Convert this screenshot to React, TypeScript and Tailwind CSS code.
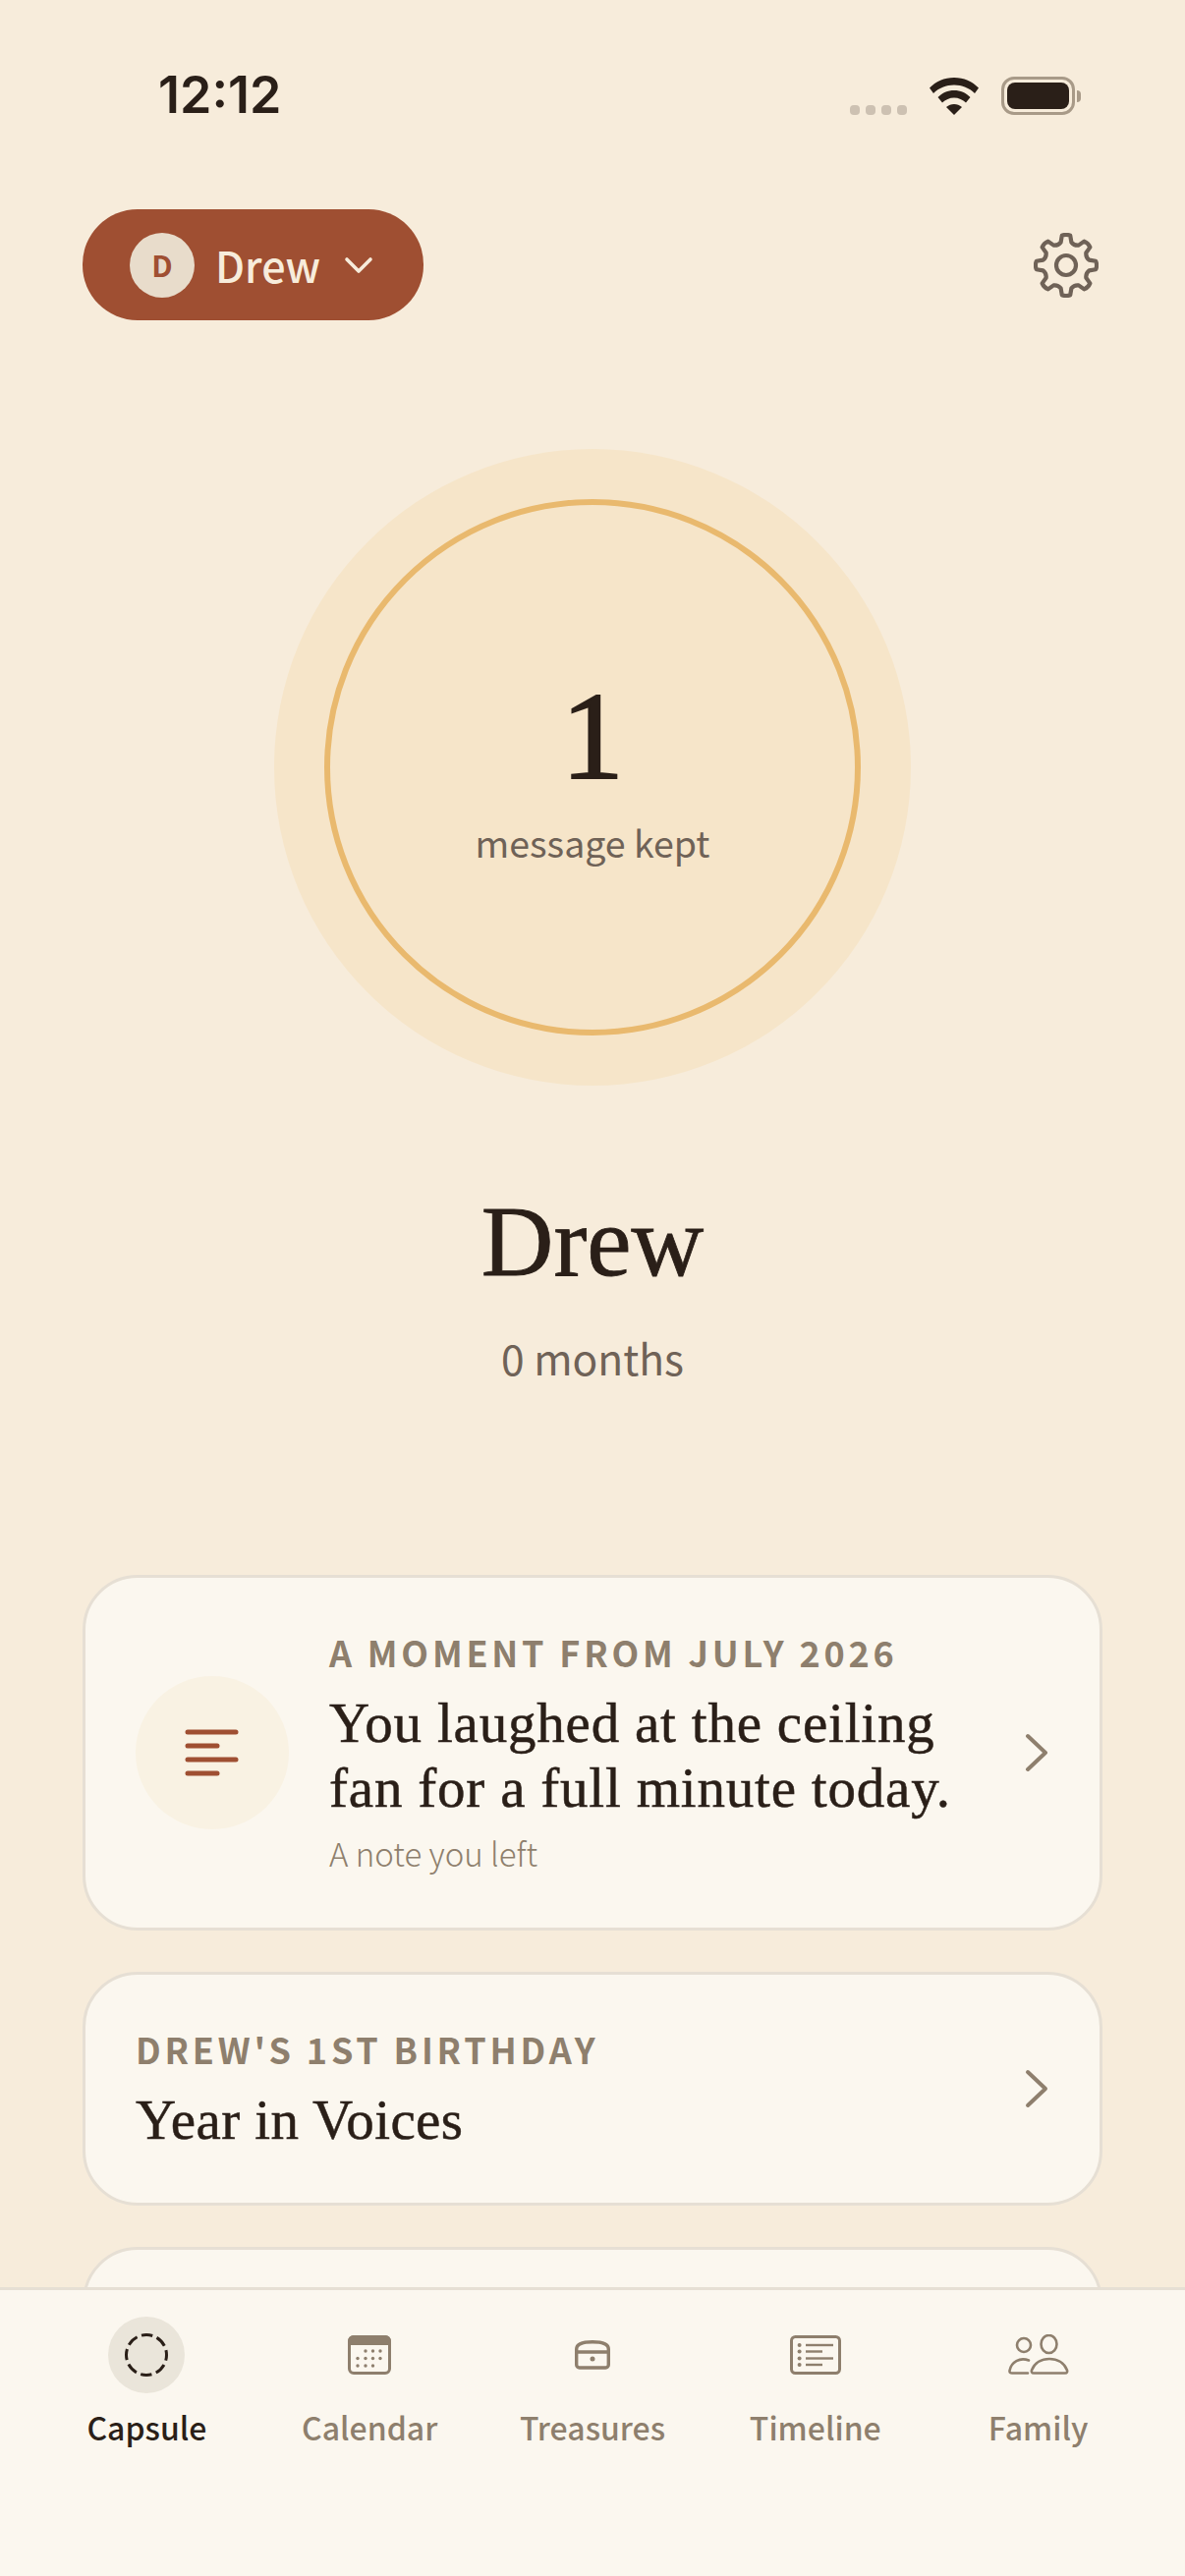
import { ChevronDown } from 'lucide-react'

const sans = "font-['Noto_Sans_CJK_SC','Noto_Sans',sans-serif]"

const CardChevron = () => (
  <svg width="24" height="40" viewBox="0 0 24 40" fill="none" className="shrink-0 text-[#8E7F6D]">
    <path d="M3 3 L21 20 L3 37" stroke="currentColor" strokeWidth="4" strokeLinecap="round" strokeLinejoin="round" />
  </svg>
)

const NoteIcon = () => (
  <svg width="56" height="48" viewBox="0 0 56 48" fill="none" stroke="#9F4F32" strokeWidth="5" strokeLinecap="round">
    <path d="M3 3H52" />
    <path d="M3 17H33" />
    <path d="M3 31H52" />
    <path d="M3 45H33" />
  </svg>
)

// 8 tooth gear outline, same shape as the settings button in the design
const gearPath = (() => {
  const c = 33
  const pt = (deg: number, r: number) => {
    const a = ((deg - 90) * Math.PI) / 180
    return `${(c + r * Math.cos(a)).toFixed(2)} ${(c + r * Math.sin(a)).toFixed(2)}`
  }
  let d = ''
  for (let i = 0; i < 8; i++) {
    const a = i * 45
    d += `${i === 0 ? 'M' : 'L'}${pt(a - 13, 24)} L${pt(a - 8, 30.5)} Q${pt(a, 32)} ${pt(a + 8, 30.5)} L${pt(a + 13, 24)} Q${pt(a + 22.5, 21.5)} ${pt(a + 32, 24)} `
  }
  return d + 'Z'
})()

const GearIcon = () => (
  <svg width="66" height="66" viewBox="0 0 66 66" fill="none" stroke="#6F6257" strokeWidth="4.2" strokeLinejoin="round">
    <path d={gearPath} />
    <circle cx="33" cy="33" r="10" />
  </svg>
)

const CapsuleIcon = () => (
  <svg width="46" height="46" viewBox="0 0 46 46" fill="none">
    <circle cx="23" cy="23" r="20.5" stroke="#2A1F18" strokeWidth="3" strokeDasharray="11.5 4.6" strokeDashoffset="5.75" />
  </svg>
)

const CalendarIcon = () => {
  const dots = [
    [18, 16], [25.5, 16], [33, 16],
    [10, 23.5], [18, 23.5], [25.5, 23.5], [33, 23.5],
    [10, 31], [18, 31], [25.5, 31],
  ]
  return (
    <svg width="44" height="40" viewBox="0 0 44 40" fill="none">
      <rect x="1.5" y="1.5" width="41" height="37" rx="4.5" stroke="#8E7F6D" strokeWidth="3" />
      <path d="M6 0H38A6 6 0 0 1 44 6V10H0V6A6 6 0 0 1 6 0Z" fill="#8E7F6D" />
      {dots.map(([cx, cy]) => (
        <circle key={`${cx}-${cy}`} cx={cx} cy={cy} r="1.7" fill="#8E7F6D" />
      ))}
    </svg>
  )
}

const TreasureIcon = () => (
  <svg width="36" height="30" viewBox="0 0 36 30" fill="none" stroke="#8E7F6D" strokeWidth="3.4">
    <path d="M1.7 25V9C1.7 4 8 1.7 18 1.7S34.300 4 34.300 9V25A3 3 0 0 1 31.300 28H4.700A3 3 0 0 1 1.700 25Z" />
    <path d="M1.700 12H34.300" />
    <circle cx="18" cy="19" r="2.500" fill="#8E7F6D" stroke="none" />
  </svg>
)

const TimelineIcon = () => (
  <svg width="52" height="40" viewBox="0 0 52 40" fill="none" stroke="#8E7F6D">
    <rect x="1.500" y="1.500" width="49" height="37" rx="4" strokeWidth="3" />
    <g strokeWidth="2.400">
      <path d="M16 10H44" />
      <path d="M16 16.500H33" />
      <path d="M16 23.500H44" />
      <path d="M16 30H33" />
    </g>
    <g fill="#8E7F6D" stroke="none">
      <circle cx="9.600" cy="10" r="2" />
      <circle cx="9.600" cy="16.500" r="2" />
      <circle cx="9.600" cy="23.500" r="2" />
      <circle cx="9.600" cy="30" r="2" />
    </g>
  </svg>
)

const FamilyIcon = () => (
  <svg width="62" height="42" viewBox="0 0 62 42" fill="none" stroke="#8E7F6D" strokeWidth="2.600" strokeLinecap="round">
    <circle cx="16" cy="11" r="7" />
    <ellipse cx="41.500" cy="10" rx="8" ry="9" />
    <path d="M21 26.500C12 23 3 28 1.500 37C1.300 39 2.500 39.500 4 39.500H20" />
    <path d="M26 39.500H58C60 39.500 60.500 38 60 36.500C57 29 50 25 42 25S27 29 24 36.500C23.500 38 24 39.500 26 39.500Z" />
  </svg>
)

const tabs = [
  { label: 'Capsule', icon: <CapsuleIcon />, active: true },
  { label: 'Calendar', icon: <CalendarIcon />, active: false },
  { label: 'Treasures', icon: <TreasureIcon />, active: false },
  { label: 'Timeline', icon: <TimelineIcon />, active: false },
  { label: 'Family', icon: <FamilyIcon />, active: false },
]

const App = () => {
  return (
    <div className={`flex h-[2622px] w-[1206px] flex-col overflow-hidden bg-[#F7ECDB] ${sans}`}>
      <div className="min-h-0 flex-1 overflow-hidden">
        {/* status bar */}
        <div className="flex h-[213px] items-start justify-between pl-[161px] pr-[106px] pt-[65px]">
          <span className="font-['Inter',sans-serif] text-[52px] font-semibold leading-[64px] text-[#2A1F18]">12:12</span>
          <div className="flex items-center gap-[22px] pt-[13px]">
            <div className="mt-[28px] flex gap-[6px]">
              <span className="h-[10px] w-[10px] rounded-[4px] bg-[#CDC1B2]" />
              <span className="h-[10px] w-[10px] rounded-[4px] bg-[#CDC1B2]" />
              <span className="h-[10px] w-[10px] rounded-[4px] bg-[#CDC1B2]" />
              <span className="h-[10px] w-[10px] rounded-[4px] bg-[#CDC1B2]" />
            </div>
            <svg width="52" height="38" viewBox="0 0 52 38" fill="#2A1F18">
              <path d="M26 0C16 0 7.500 4 1 10.500L5 16C10.500 10.500 18 7.500 26 7.500S41.500 10.500 47 16L51 10.500C44.500 4 36 0 26 0Z" />
              <path d="M26 13C19.500 13 14 15.500 9.500 20L14 25.500C17 22.500 21.500 20.500 26 20.500S35 22.500 38 25.500L42.500 20C38 15.500 32.500 13 26 13Z" />
              <path d="M26 27C23 27 20.500 28 18 30L26 38L34 30C31.500 28 29 27 26 27Z" />
            </svg>
            <div className="flex items-center gap-[2px]">
              <div className="flex h-[39px] w-[75px] items-center justify-center rounded-[13px] border-[3px] border-[#A89A88]">
                <div className="h-[27px] w-[63px] rounded-[8px] bg-[#2A1F18]" />
              </div>
              <span className="h-[12px] w-[4px] rounded-r-[4px] bg-[#A89A88]" />
            </div>
          </div>
        </div>

        {/* header */}
        <div className="flex items-center justify-between pl-[84px] pr-[88px]">
          <button className="flex h-[113px] w-[347px] items-center rounded-[56px] bg-[#9F4F32] pl-[48px]">
            <span className="flex h-[66px] w-[66px] items-center justify-center rounded-full bg-[#E8DCCB] text-[30px] font-bold text-[#9F4F32]">D</span>
            <span className="ml-[21px] text-[43px] font-medium leading-none text-[#F7ECDB]">Drew</span>
            <ChevronDown className="ml-[15px] text-[#F7ECDB]" size={48} strokeWidth={1.8} />
          </button>
          <GearIcon />
        </div>

        {/* counter */}
        <div className="mt-[131px] flex justify-center">
          <div className="flex h-[648px] w-[648px] items-center justify-center rounded-full bg-[#F6E5C9]">
            <div className="flex h-[546px] w-[546px] flex-col items-center justify-center rounded-full border-[6px] border-[#E9B96E] pt-[8px]">
              <span className="font-['Liberation_Serif',serif] text-[128px] leading-[128px] text-[#2A1F18] [-webkit-text-stroke:2px_#2A1F18]">1</span>
              <span className="mt-[16px] text-[37.5px] leading-[56px] text-[#6F6257]">message kept</span>
            </div>
          </div>
        </div>

        <div className="mt-[103px] flex flex-col items-center">
          <h1 className="font-['Liberation_Serif',serif] text-[102px] leading-[112px] text-[#2A1F18] [-webkit-text-stroke:0.8px_#2A1F18]">Drew</h1>
          <p className="mt-[32px] text-[42.5px] leading-[60px] text-[#6F6257]">0 months</p>
        </div>

        {/* cards */}
        <div className="mt-[191px] flex flex-col gap-[42px] px-[84px]">
          <div className="flex h-[362px] items-center rounded-[56px] border-[3px] border-[#E6DFD4] bg-[#FBF7EF] pl-[51px] pr-[52px]">
            <div className="flex h-[156px] w-[156px] shrink-0 items-center justify-center rounded-full bg-[#F9F2E3]">
              <NoteIcon />
            </div>
            <div className="ml-[41px] min-w-0 flex-1 pb-[3px]">
              <p className="text-[36px] font-bold leading-[48px] tracking-[3.8px] text-[#8E7F6D]">A MOMENT FROM JULY 2026</p>
              <p className="mt-[16px] font-['Liberation_Serif',serif] text-[57px] leading-[66px] tracking-[0.8px] text-[#2A1F18] [-webkit-text-stroke:0.5px_#2A1F18]">
                You laughed at the ceiling<br />fan for a full minute today.
              </p>
              <p className="mt-[10px] text-[33px] font-light leading-[46px] text-[#8E7F6D]">A note you left</p>
            </div>
            <CardChevron />
          </div>

          <div className="flex h-[238px] items-center justify-between rounded-[56px] border-[3px] border-[#E6DFD4] bg-[#FBF7EF] pl-[51px] pr-[52px]">
            <div>
              <p className="text-[36px] font-bold leading-[48px] tracking-[3.8px] text-[#8E7F6D]">DREW'S 1ST BIRTHDAY</p>
              <p className="mt-[16px] font-['Liberation_Serif',serif] text-[57px] leading-[66px] tracking-[0.4px] text-[#2A1F18] [-webkit-text-stroke:0.5px_#2A1F18]">Year in Voices</p>
            </div>
            <CardChevron />
          </div>

          <div className="h-[238px] rounded-[56px] border-[3px] border-[#E6DFD4] bg-[#FBF7EF]" />
        </div>
      </div>

      {/* tab bar */}
      <nav className="grid h-[294px] shrink-0 grid-cols-5 border-t-[3px] border-[#E6DFD4] bg-[#FBF7EF] px-[36px] pt-[27px]">
        {tabs.map((tab) => (
          <div key={tab.label} className="flex flex-col items-center">
            <div className={`flex h-[78px] w-[78px] items-center justify-center rounded-full ${tab.active ? 'bg-[#EAE5DA]' : ''}`}>
              {tab.icon}
            </div>
            <span className={`mt-[11px] text-[32px] font-medium leading-[46px] ${tab.active ? 'text-[#2A1F18]' : 'text-[#8E7F6D]'}`}>{tab.label}</span>
          </div>
        ))}
      </nav>
    </div>
  )
}

export default App
